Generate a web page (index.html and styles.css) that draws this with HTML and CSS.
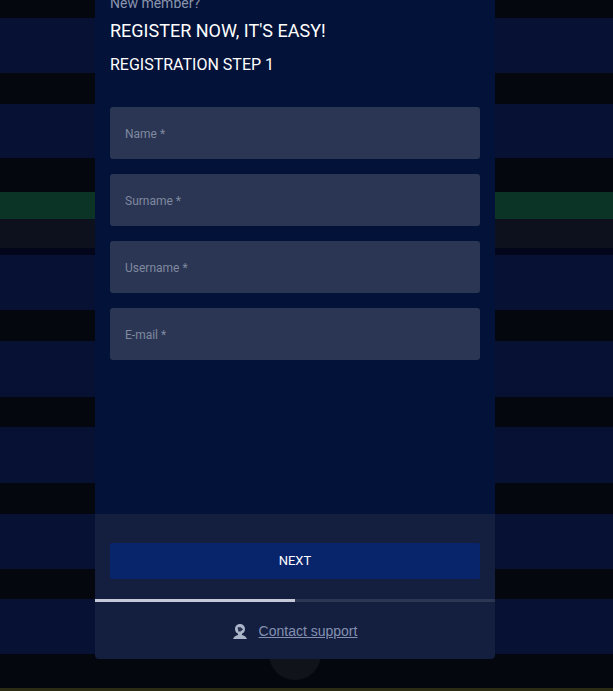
FILE: index.html
```html
<!DOCTYPE html>
<html lang="en">
<head>
<meta charset="utf-8">
<title>Register</title>
<link rel="stylesheet" href="styles.css">
</head>
<body>
<div class="backdrop">
  <div class="band dark h18"></div>
  <div class="band navy h55"></div>
  <div class="band dark h31"></div>
  <div class="band navy h54"></div>
  <div class="band dark h34"></div>
  <div class="band green"></div>
  <div class="band grey"></div>
  <div class="band deep"></div>
  <div class="band navy h55"></div>
  <div class="band dark h31"></div>
  <div class="band navy h56"></div>
  <div class="band dark h30"></div>
  <div class="band navy h56"></div>
  <div class="band dark h31"></div>
  <div class="band navy h55"></div>
  <div class="band dark h30"></div>
  <div class="band navy h55"></div>
  <div class="band dark h34"></div>
  <div class="band olive"></div>
</div>
<div class="bubble"></div>
<main class="modal">
  <section class="form-area">
    <p class="eyebrow">New member?</p>
    <h1 class="title">REGISTER NOW, IT'S EASY!</h1>
    <h2 class="step">REGISTRATION STEP 1</h2>
    <form class="fields">
      <input class="field" type="text" placeholder="Name *">
      <input class="field" type="text" placeholder="Surname *">
      <input class="field" type="text" placeholder="Username *">
      <input class="field" type="email" placeholder="E-mail *">
    </form>
  </section>
  <section class="footer">
    <div class="action"><button class="next" type="button">NEXT</button></div>
    <div class="progress"><div class="progress-fill"></div></div>
    <div class="support">
      <svg class="support-icon" viewBox="0 0 14 15" aria-hidden="true">
        <path fill="#aab4c8" d="M7 0C4 0 2 2.2 2 5c0 2.2 1.2 4 3 4.8V11C3 11.6.8 12.6 0 15h14c-.8-2.4-3-3.4-5-4V9.8c1.8-.8 3-2.6 3-4.8C12 2.2 10 0 7 0z"/>
        <path fill="#28324f" d="M4.6 3.2h3l2.6 2-2.6 2.2H5.4z"/>
      </svg>
      <a class="support-link" href="#">Contact support</a>
    </div>
  </section>
</main>
</body>
</html>
```
FILE: styles.css
```css
* { box-sizing: border-box; }
html, body { margin: 0; padding: 0; height: 100%; overflow: hidden; background: #05070f; }
body { position: relative; font-family: Roboto, "Liberation Sans", sans-serif; }

.backdrop { display: flex; flex-direction: column; height: 691px; }
.band { flex: none; }
.dark { background: #04070e; }
.navy { background: #071133; }
.h18 { height: 18px; }
.h30 { height: 30px; }
.h31 { height: 31px; }
.h34 { height: 34px; }
.h54 { height: 54px; }
.h55 { height: 55px; }
.h56 { height: 56px; }
.green { height: 27px; background: #0c3426; }
.grey { height: 29px; background: #0d111d; }
.deep { height: 7px; background: #03061a; }
.olive { height: 4px; background: #2c2c14; }

.bubble {
  position: absolute; left: 269px; top: 628px;
  width: 52px; height: 52px; border-radius: 50%;
  background: #11131b;
}

.modal {
  position: absolute; left: 95px; bottom: 32px;
  width: 400px; height: 675px;
  display: flex; flex-direction: column;
  border-radius: 0 0 4px 4px; overflow: hidden;
}

.form-area { flex: none; height: 530px; padding: 0 15px; background: #031239; }
.eyebrow { margin: 0; padding-top: 10px; font-size: 14px; line-height: 18px; height: 27px; color: #8a94ac; }
.title { margin: 0; padding-top: 9px; font-size: 18px; line-height: 21px; font-weight: 400; color: #fff; }
.step { margin: 0; padding-top: 14px; font-size: 16px; line-height: 19px; font-weight: 400; color: #fff; }
.fields { display: flex; flex-direction: column; gap: 15px; margin-top: 33px; }
.field {
  display: block; width: 100%; height: 52px; padding: 2px 15px 0;
  border: 0; border-radius: 3px; outline: 0;
  background: #2b3654; color: #fff;
  font-family: Roboto, "Liberation Sans", sans-serif; font-size: 12px;
}
.field::placeholder { color: #7f899f; opacity: 1; }

.footer { flex: 1; background: #141f40; }
.action { height: 85px; padding: 29px 15px 0; }
.next {
  display: block; width: 100%; height: 36px; padding: 0 0 2px; border: 0; border-radius: 2px;
  background: #08246a; color: #fff;
  font-family: Roboto, "Liberation Sans", sans-serif; font-size: 13px; font-weight: 400;
}
.progress { height: 3px; background: #2b3653; }
.progress-fill { width: 50%; height: 100%; background: #c3c9d6; }
.support { display: flex; align-items: center; justify-content: center; gap: 12px; height: 58px; }
.support-icon { width: 14px; height: 15px; flex: none; }
.support-link { font-family: "Liberation Sans", Arial, sans-serif; font-size: 14px; color: #8390b0; text-decoration: underline; }
```
